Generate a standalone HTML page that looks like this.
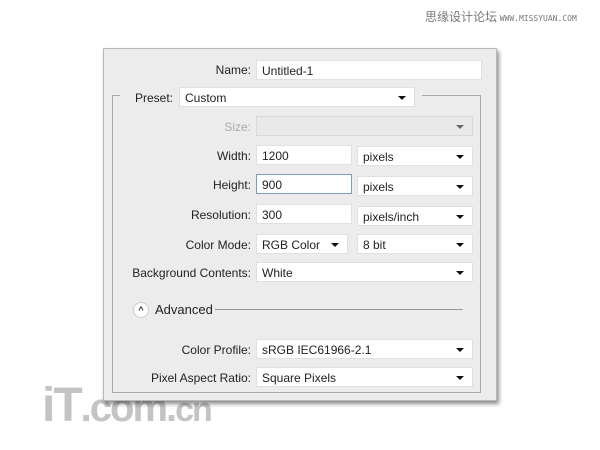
<!DOCTYPE html><html><head><style>
body{margin:0;width:600px;height:450px;background:#fff;position:relative;overflow:hidden;font-family:"Liberation Sans","DejaVu Sans",sans-serif;font-size:12px;color:#222}
.a{position:absolute}
.dlg{left:103px;top:48px;width:392px;height:351px;background:#ececec;border:1px solid #b8b8b8;box-shadow:2px 3px 4px rgba(0,0,0,.45)}
.grp{left:112px;top:95px;width:367px;height:296px;border:1px solid #a8a8a8}
.lbl{text-align:right;width:140px;left:111px}
.f{background:#fff;border:1px solid #e0e0e0;height:20px;line-height:20px;padding-left:5px;box-sizing:border-box}
.s::after{content:"";position:absolute;right:8px;top:8px;border-left:4px solid transparent;border-right:4px solid transparent;border-top:4px solid #111}
</style></head><body>
<div class="a" style="left:425px;top:8px;font-size:12px;color:#777;font-family:'Noto Sans CJK SC',sans-serif">思缘设计论坛 <span style="font-size:8px;font-family:'DejaVu Sans Mono',monospace">WWW.MISSYUAN.COM</span></div>
<div class="a" style="left:42px;top:378px;font:bold 48px 'Liberation Sans',sans-serif;color:#c4c4c4;letter-spacing:-2px">iT<span style="font-size:40px">.com.</span><span style="font-size:34px">cn</span></div>
<div class="a dlg"></div>
<div class="a grp"></div>
<div class="a" style="left:120px;top:88px;width:302px;height:20px;background:#ececec"></div>
<div class="a lbl" style="top:63px">Name:</div><div class="a f" style="left:256px;top:60px;width:226px">Untitled-1</div>
<div class="a" style="left:135px;top:91px">Preset:</div><div class="a f s" style="left:179px;top:87px;width:236px">Custom</div>
<div class="a lbl" style="top:120px;color:#aaa">Size:</div><div class="a f s" style="left:256px;top:116px;width:217px;background:#e8e8e8;border-color:#ccc;opacity:.6"></div>
<div class="a lbl" style="top:149px">Width:</div><div class="a f" style="left:256px;top:145px;width:96px">1200</div><div class="a f s" style="left:357px;top:146px;width:116px;top:146px">pixels</div>
<div class="a lbl" style="top:178px">Height:</div><div class="a f" style="left:256px;top:174px;width:96px;border-color:#7a9cc0">900</div><div class="a f s" style="left:357px;top:176px;width:116px">pixels</div>
<div class="a lbl" style="top:208px">Resolution:</div><div class="a f" style="left:256px;top:204px;width:96px">300</div><div class="a f s" style="left:357px;top:206px;width:116px">pixels/inch</div>
<div class="a lbl" style="top:238px">Color Mode:</div><div class="a f s" style="left:256px;top:234px;width:92px">RGB Color</div><div class="a f s" style="left:357px;top:234px;width:116px">8 bit</div>
<div class="a lbl" style="top:266px">Background Contents:</div><div class="a f s" style="left:256px;top:262px;width:217px">White</div>
<div class="a" style="left:133px;top:302px;width:14px;height:14px;border-radius:50%;background:#fff;border:1px solid #ccc;font-size:9px;line-height:14px;text-align:center;font-weight:bold">^</div>
<div class="a" style="left:155px;top:302px;font-size:13px">Advanced</div>
<div class="a" style="left:215px;top:309px;width:248px;height:1px;background:#999"></div>
<div class="a lbl" style="top:343px">Color Profile:</div><div class="a f s" style="left:256px;top:339px;width:217px">sRGB IEC61966-2.1</div>
<div class="a lbl" style="top:371px">Pixel Aspect Ratio:</div><div class="a f s" style="left:256px;top:367px;width:217px">Square Pixels</div>
</body></html>
